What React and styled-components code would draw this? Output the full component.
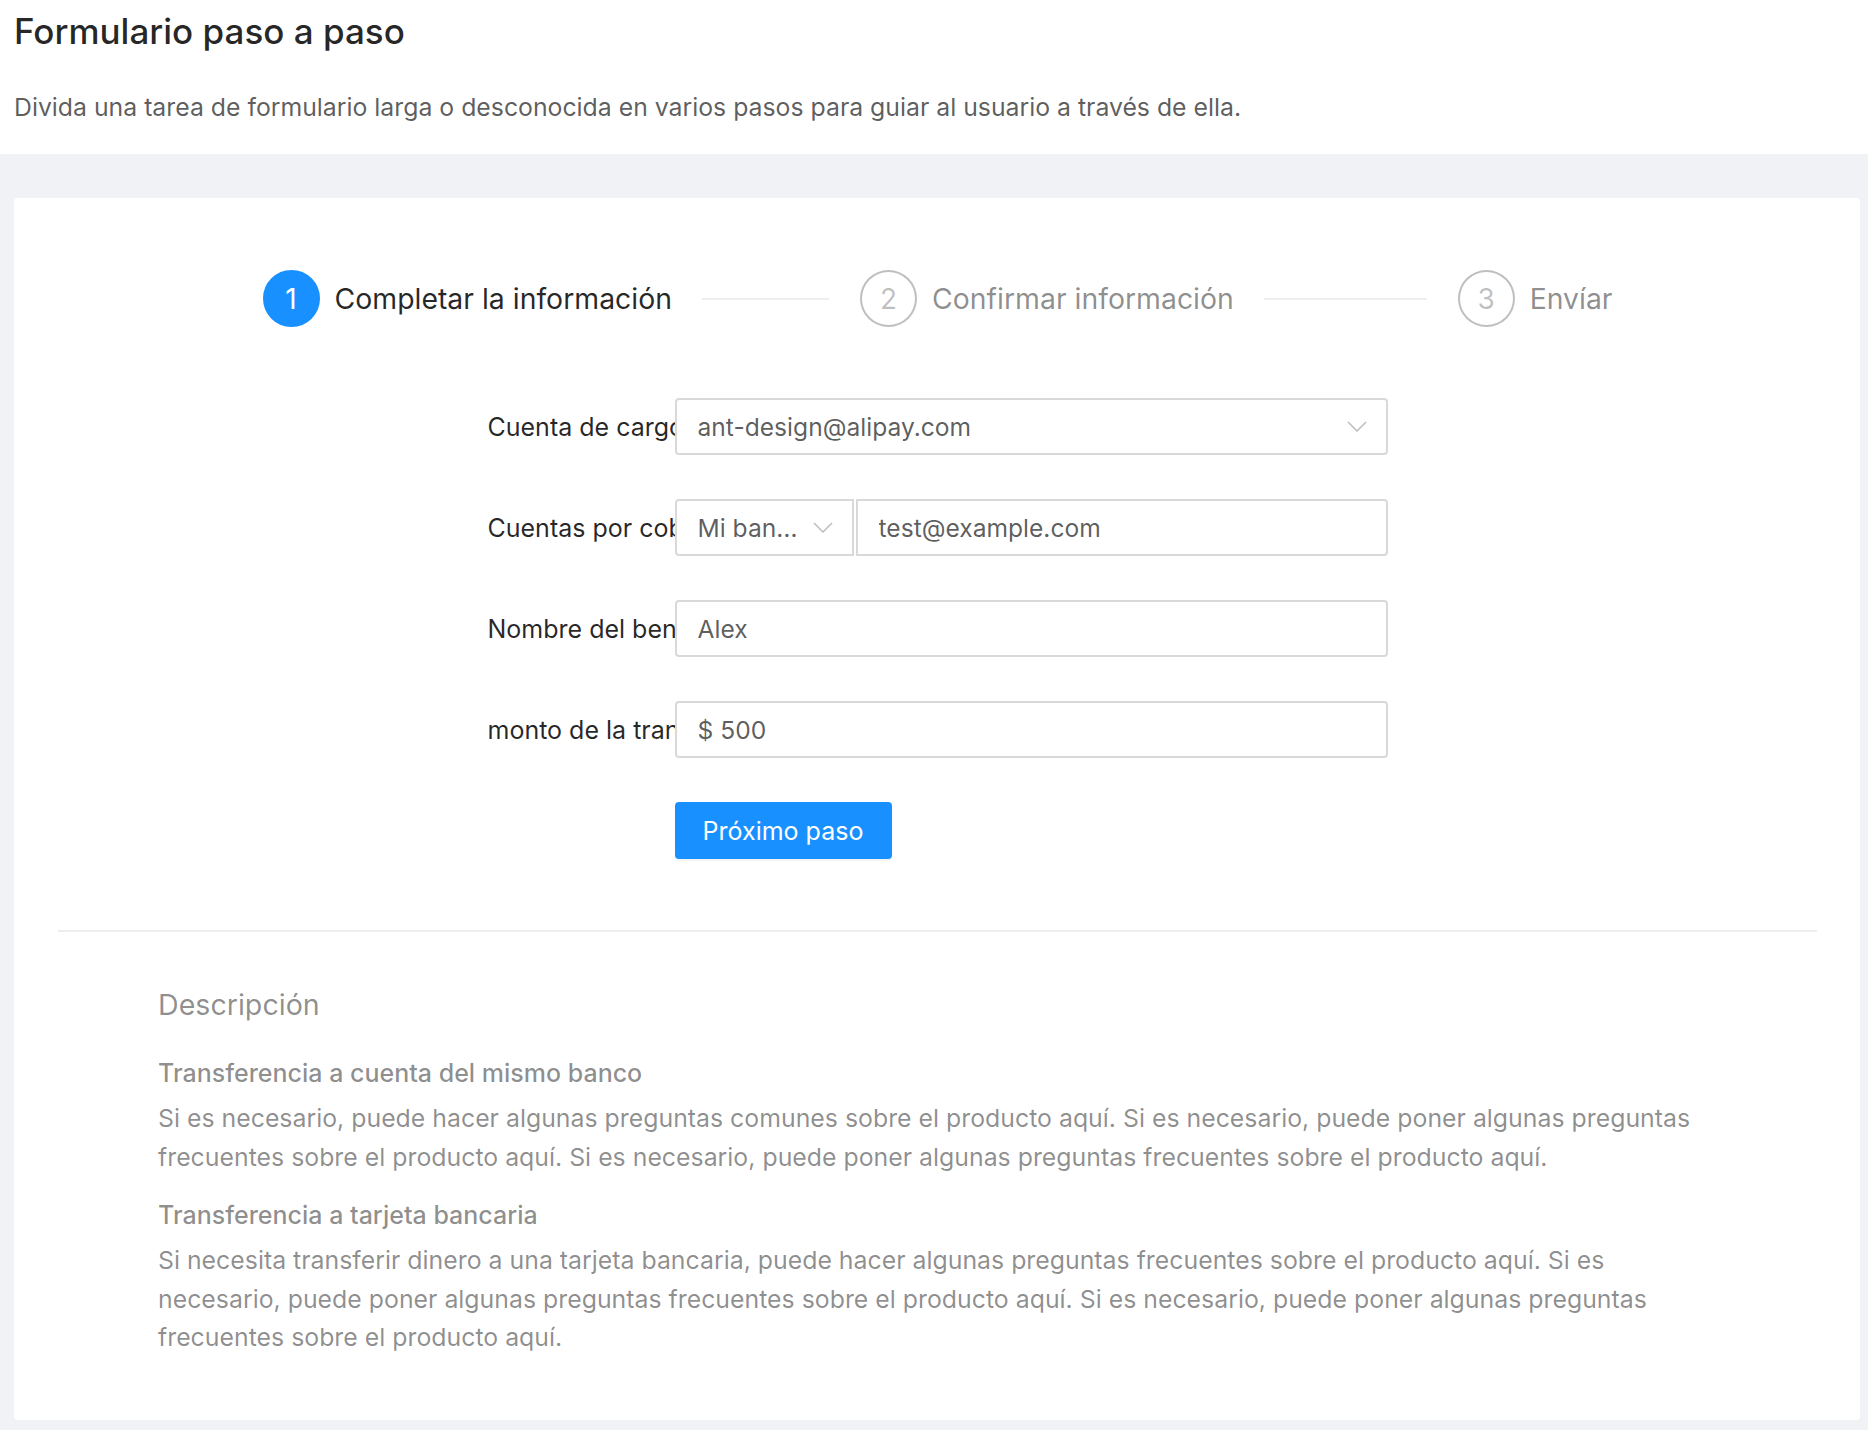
import React from 'react';
import styled, { createGlobalStyle } from 'styled-components';

const GlobalStyle = createGlobalStyle`
  body {
    margin: 0;
    background: #f0f2f5;
    font-family: Inter, "Noto Sans", "Liberation Sans", sans-serif;
    -webkit-font-smoothing: antialiased;
  }
`;

const PageHeader = styled.div`
  background: #fff;
  padding: 6px 14px 25px;
`;

const Title = styled.h1`
  margin: 0;
  font-size: 35px;
  line-height: 50px;
  font-weight: 500;
  color: rgba(0, 0, 0, 0.85);
`;

const Lead = styled.p`
  margin: 29px 0 0;
  font-size: 24.8px;
  line-height: 44px;
  color: rgba(0, 0, 0, 0.65);
`;

const Content = styled.div`
  padding: 44px 8px 10px 14px;
`;

const Card = styled.div`
  background: #fff;
  border-radius: 4px;
  padding: 72px 43px 43px 44px;
`;

const Steps = styled.div`
  display: flex;
  align-items: center;
  width: 1350px;
  margin: 0 auto;
`;

const Step = styled.div`
  display: flex;
  align-items: center;
  flex: ${(p) => (p.$last ? '0 0 auto' : '1 1 0')};
`;

const StepIcon = styled.div`
  width: 57px;
  height: 57px;
  box-sizing: border-box;
  border-radius: 50%;
  display: flex;
  align-items: center;
  justify-content: center;
  font-size: 28px;
  flex: none;
  background: ${(p) => (p.$active ? '#1890ff' : '#fff')};
  border: 2px solid ${(p) => (p.$active ? '#1890ff' : 'rgba(0, 0, 0, 0.25)')};
  color: ${(p) => (p.$active ? '#fff' : 'rgba(0, 0, 0, 0.25)')};
`;

const StepTitle = styled.div`
  margin-left: 15px;
  font-size: 28.4px;
  line-height: 57px;
  white-space: nowrap;
  color: ${(p) => (p.$active ? 'rgba(0, 0, 0, 0.85)' : 'rgba(0, 0, 0, 0.45)')};
`;

const Tail = styled.div`
  flex: 1;
  height: 2px;
  background: #eeeeee;
  margin: 0 31px 0 30px;
`;

const Form = styled.div`
  width: 900px;
  margin: 71px auto 0;
  display: flex;
  flex-direction: column;
  gap: 44px;
`;

const Row = styled.div`
  display: flex;
  align-items: center;
  height: 57px;
`;

const Label = styled.label`
  width: 187px;
  flex: none;
  overflow: hidden;
  white-space: nowrap;
  font-size: 25px;
  color: rgba(0, 0, 0, 0.85);
`;

const Control = styled.div`
  flex: 1;
  display: flex;
  height: 100%;
`;

const Field = styled.div`
  box-sizing: border-box;
  height: 57px;
  display: flex;
  align-items: center;
  justify-content: space-between;
  gap: 12px;
  padding: 0 19px 0 21px;
  border: 2px solid #d9d9d9;
  border-radius: ${(p) => p.$radius || '4px'};
  width: ${(p) => p.$width || 'auto'};
  flex: ${(p) => (p.$width ? 'none' : '1')};
  margin-left: ${(p) => p.$gap || '0'};
  font-size: 24.6px;
  color: rgba(0, 0, 0, 0.65);
  background: #fff;
`;

const FieldText = styled.span`
  overflow: hidden;
  white-space: nowrap;
  text-overflow: ellipsis;
`;

const Chevron = () => (
  <svg width="20" height="11" viewBox="0 0 20 11" fill="none" style={{ flex: 'none' }}>
    <path d="M1 1l9 9 9-9" stroke="rgba(0,0,0,0.25)" strokeWidth="1.6" />
  </svg>
);

const Button = styled.button`
  margin-left: 187px;
  width: 217px;
  height: 57px;
  border: none;
  border-radius: 4px;
  background: #1890ff;
  color: #fff;
  font-family: inherit;
  font-size: 25px;
  box-shadow: 0 2px 0 rgba(0, 0, 0, 0.045);
  cursor: pointer;
`;

const Divider = styled.div`
  height: 2px;
  background: #eeeeee;
  margin: 71px 0 44px;
`;

const Desc = styled.div`
  padding: 0 100px;
  color: rgba(0, 0, 0, 0.45);
`;

const DescTitle = styled.h3`
  margin: 0 0 21px;
  font-size: 28.6px;
  line-height: 57px;
  font-weight: 400;
`;

const DescSub = styled.h4`
  margin: 0 0 7px;
  font-size: 25px;
  line-height: 38px;
  font-weight: 500;
`;

const DescText = styled.p`
  margin: 0 0 20px;
  font-size: 24.85px;
  line-height: 38.5px;
`;

const steps = ['Completar la información', 'Confirmar información', 'Envíar'];

export default function App() {
  return (
    <>
      <GlobalStyle />
      <PageHeader>
        <Title>Formulario paso a paso</Title>
        <Lead>
          Divida una tarea de formulario larga o desconocida en varios pasos para guiar al usuario a través de ella.
        </Lead>
      </PageHeader>
      <Content>
        <Card>
          <Steps>
            {steps.map((s, i) => {
              const last = i === steps.length - 1;
              return (
                <Step key={s} $last={last}>
                  <StepIcon $active={i === 0}>{i + 1}</StepIcon>
                  <StepTitle $active={i === 0}>{s}</StepTitle>
                  {!last && <Tail />}
                </Step>
              );
            })}
          </Steps>

          <Form>
            <Row>
              <Label>Cuenta de cargo</Label>
              <Control>
                <Field>
                  <FieldText>ant-design@alipay.com</FieldText>
                  <Chevron />
                </Field>
              </Control>
            </Row>
            <Row>
              <Label>Cuentas por cobrar</Label>
              <Control>
                <Field $width="179px" $radius="4px 0 0 4px">
                  <FieldText>Mi banco</FieldText>
                  <Chevron />
                </Field>
                <Field $radius="0 4px 4px 0" $gap="2px">
                  <FieldText>test@example.com</FieldText>
                </Field>
              </Control>
            </Row>
            <Row>
              <Label>Nombre del beneficiario</Label>
              <Control>
                <Field>
                  <FieldText>Alex</FieldText>
                </Field>
              </Control>
            </Row>
            <Row>
              <Label>monto de la transferencia</Label>
              <Control>
                <Field>
                  <FieldText>$ 500</FieldText>
                </Field>
              </Control>
            </Row>
            <Row>
              <Button>Próximo paso</Button>
            </Row>
          </Form>

          <Divider />

          <Desc>
            <DescTitle>Descripción</DescTitle>
            <DescSub>Transferencia a cuenta del mismo banco</DescSub>
            <DescText>
              Si es necesario, puede hacer algunas preguntas comunes sobre el producto aquí. Si es necesario, puede poner algunas preguntas frecuentes sobre el producto aquí. Si es necesario, puede poner algunas preguntas frecuentes sobre el producto aquí.
            </DescText>
            <DescSub>Transferencia a tarjeta bancaria</DescSub>
            <DescText>
              Si necesita transferir dinero a una tarjeta bancaria, puede hacer algunas preguntas frecuentes sobre el producto aquí. Si es necesario, puede poner algunas preguntas frecuentes sobre el producto aquí. Si es necesario, puede poner algunas preguntas frecuentes sobre el producto aquí.
            </DescText>
          </Desc>
        </Card>
      </Content>
    </>
  );
}
